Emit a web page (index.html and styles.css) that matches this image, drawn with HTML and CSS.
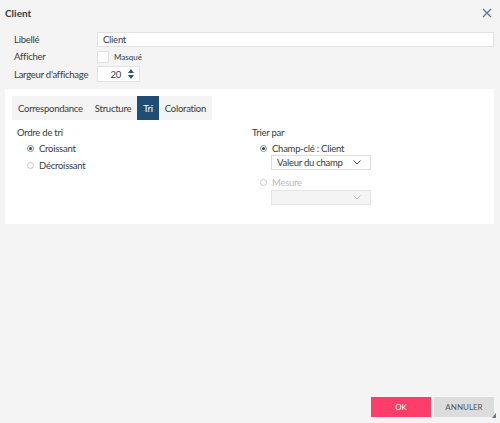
FILE: index.html
```html
<!DOCTYPE html>
<html lang="fr">
<head>
<meta charset="utf-8">
<link rel="stylesheet" href="styles.css">
</head>
<body>
<div class="dialog">
  <div class="header">
    <span class="title">Client</span>
    <svg class="close" width="10" height="10" viewBox="0 0 10 10"><path d="M1 1L9 9M9 1L1 9" stroke="#5b7894" stroke-width="1.3" fill="none"/></svg>
  </div>
  <div class="form">
    <div class="row">
      <span class="label">Libellé</span>
      <div class="input text">Client</div>
    </div>
    <div class="row">
      <span class="label">Afficher</span>
      <span class="checkbox"></span>
      <span class="small">Masqué</span>
    </div>
    <div class="row">
      <span class="label">Largeur d'affichage</span>
      <div class="input spin"><span>20</span>
        <svg class="arrows" width="6" height="12" viewBox="0 0 6 12"><path d="M3 1L6 5H0Z M0 7H6L3 11Z" fill="#2a5478"/></svg>
      </div>
    </div>
  </div>
  <div class="panel">
    <div class="tabs">
      <span class="tab">Correspondance</span>
      <span class="tab">Structure</span>
      <span class="tab active">Tri</span>
      <span class="tab">Coloration</span>
    </div>
    <div class="cols">
      <div class="col">
        <div class="heading">Ordre de tri</div>
        <div class="radio-row"><span class="radio on"></span><span>Croissant</span></div>
        <div class="radio-row"><span class="radio"></span><span>Décroissant</span></div>
      </div>
      <div class="col right">
        <div class="heading">Trier par</div>
        <div class="radio-row"><span class="radio on"></span><span>Champ-clé : Client</span></div>
        <div class="select first"><span>Valeur du champ</span>
          <svg width="8" height="5" viewBox="0 0 8 5"><path d="M0.5 0.5L4 4L7.5 0.5" stroke="#444" fill="none"/></svg>
        </div>
        <div class="radio-row disabled mesure"><span class="radio"></span><span>Mesure</span></div>
        <div class="select disabled"><span></span>
          <svg width="8" height="5" viewBox="0 0 8 5"><path d="M0.5 0.5L4 4L7.5 0.5" stroke="#bbb" fill="none"/></svg>
        </div>
      </div>
    </div>
  </div>
  <div class="spacer"></div>
  <div class="footer">
    <button class="btn ok">OK</button>
    <button class="btn cancel">ANNULER</button>
  </div>
  <svg class="grip" width="5" height="5" viewBox="0 0 5 5"><path d="M4 0V5H0Z" fill="#5b7894"/></svg>
</div>
</body>
</html>
```
FILE: styles.css
```css
html, body {
  margin: 0;
  padding: 0;
}
body {
  background: #f4f4f4;
  font-family: Lato, "Open Sans", sans-serif;
  font-size: 9.5px;
  letter-spacing: -0.25px;
  color: #3a3a3a;
  white-space: nowrap;
}
.dialog {
  position: relative;
  height: 423px;
  display: flex;
  flex-direction: column;
  box-sizing: border-box;
}
.header {
  display: flex;
  justify-content: space-between;
  align-items: center;
  padding: 5px 8px 0 5px;
  height: 15px;
}
.title {
  font-weight: bold;
  font-size: 10px;
  letter-spacing: 0;
}
.close {
  display: block;
}
.form {
  display: flex;
  flex-direction: column;
  gap: 2px;
  padding: 12px 6px 0 14px;
}
.row {
  display: flex;
  align-items: center;
  min-height: 15px;
}
.label {
  width: 83px;
}
.input {
  background: #fff;
  border: 1px solid #e2e2e2;
  box-sizing: border-box;
  height: 15px;
  display: flex;
  align-items: center;
}
.input.text {
  flex: 1;
  padding-left: 5px;
}
.checkbox {
  width: 12px;
  height: 12px;
  background: #fff;
  border: 1px solid #e0e0e0;
  box-sizing: border-box;
}
.small {
  font-size: 8px;
  letter-spacing: 0;
  margin-left: 5px;
}
.input.spin {
  width: 43px;
  height: 16px;
  justify-content: flex-end;
  padding-right: 5px;
  gap: 7px;
}
.arrows {
  display: block;
}
.panel {
  background: #fff;
  margin: 7px 6px 0 5px;
  height: 135px;
  padding: 7px 7px 0 7px;
  box-sizing: border-box;
}
.tabs {
  display: flex;
  height: 24px;
}
.tab {
  background: #f4f4f4;
  padding: 0 6px;
  display: flex;
  align-items: center;
}
.tab.active {
  background: #1f4d73;
  color: #fff;
}
.cols {
  display: flex;
}
.col {
  width: 237px;
  padding-left: 5px;
}
.col.right {
  padding-left: 0;
}
.heading {
  margin-top: 6px;
  height: 13px;
  line-height: 13px;
}
.radio-row {
  display: flex;
  align-items: center;
  gap: 5px;
  padding-left: 10px;
  height: 16px;
  margin-top: 1px;
}
.col.right .radio-row {
  padding-left: 8px;
}
.radio-row.mesure {
  margin-top: 4px;
}
.radio {
  width: 7px;
  height: 7px;
  border: 1px solid #c8c8c8;
  border-radius: 50%;
  box-sizing: border-box;
  position: relative;
  background: #fff;
}
.radio.on {
  border-color: #888;
}
.radio.on::after {
  content: "";
  position: absolute;
  left: 1px;
  top: 1px;
  width: 3px;
  height: 3px;
  border-radius: 50%;
  background: #1f4d73;
}
.disabled {
  color: #bbb;
}
.select {
  margin-left: 19px;
  width: 100px;
  height: 15px;
  border: 1px solid #dcdcdc;
  box-sizing: border-box;
  display: flex;
  align-items: center;
  justify-content: space-between;
  padding: 0 9px 0 5px;
  background: #fff;
}
.select.first {
  margin-top: -1px;
}
.select.disabled {
  background: #f4f4f4;
  border-color: #e4e4e4;
}
.spacer {
  flex: 1;
}
.footer {
  display: flex;
  justify-content: flex-end;
  gap: 3px;
  padding: 0 6px 6px 0;
}
.btn {
  border: none;
  width: 60px;
  height: 20px;
  font-family: inherit;
  font-size: 8px;
  letter-spacing: 0;
  padding: 0;
}
.btn.ok {
  background: #ff3d6b;
  color: #fff;
}
.btn.cancel {
  background: #dcdcdc;
  color: #555;
}
.grip {
  position: absolute;
  right: 3px;
  bottom: 5px;
}
```
